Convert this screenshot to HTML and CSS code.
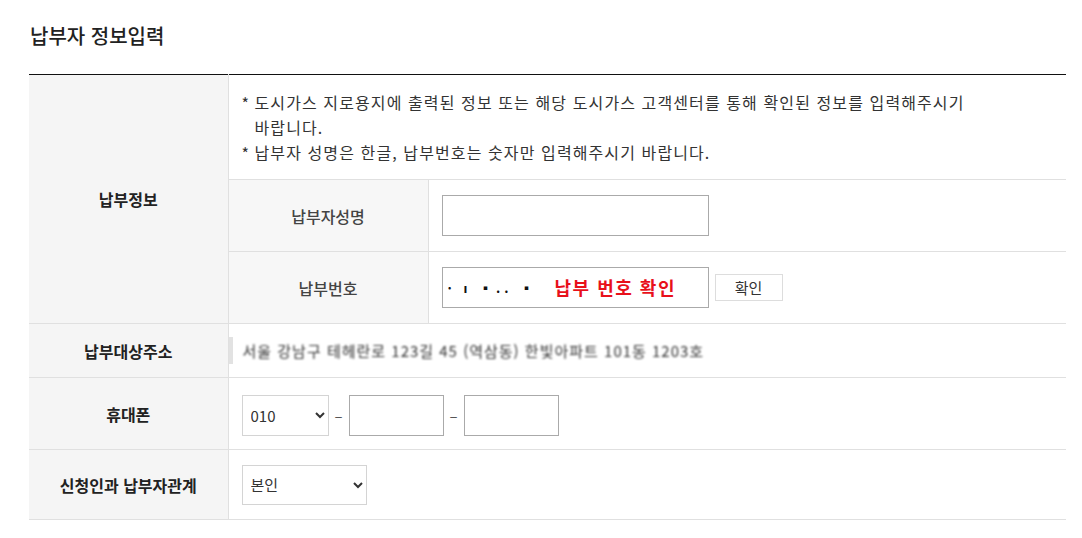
FILE: index.html
```html
<!DOCTYPE html>
<html lang="ko">
<head>
    <meta charset="UTF-8">
    <meta name="viewport" content="width=device-width, initial-scale=1.0">
    <title>납부자 정보입력</title>
    <link rel="stylesheet" href="styles.css">
</head>
<body>

<div class="container">
    <h2 class="title">납부자 정보입력</h2>

    <table class="form-table">
        <colgroup>
            <col class="col-label">
            <col class="col-sub">
            <col>
        </colgroup>
        <tr class="row-notice">
            <th rowspan="3">납부정보</th>
            <td colspan="2" class="notice">
                <ul>
                    <li>도시가스 지로용지에 출력된 정보 또는 해당 도시가스 고객센터를 통해 확인된 정보를 입력해주시기 바랍니다.</li>
                    <li>납부자 성명은 한글, 납부번호는 숫자만 입력해주시기 바랍니다.</li>
                </ul>
            </td>
        </tr>
        <tr class="row-field">
            <th class="sub">납부자성명</th>
            <td><input type="text" class="text-input wide" id="payer-name"></td>
        </tr>
        <tr class="row-field">
            <th class="sub">납부번호</th>
            <td>
                <div class="inline">
                    <div class="input-wrap">
                        <input type="text" class="text-input wide masked" id="payer-no" value="· ı ▪.. ▪">
                        <span class="check-label">납부 번호 확인</span>
                    </div>
                    <button type="button" class="small-btn">확인</button>
                </div>
            </td>
        </tr>
        <tr class="row-address">
            <th>납부대상주소</th>
            <td colspan="2" class="address-cell">
                <div class="address"><span class="masked-text">서울 강남구 테헤란로 123길 45 (역삼동) 한빛아파트 101동 1203호</span></div>
            </td>
        </tr>
        <tr class="row-field">
            <th>휴대폰</th>
            <td colspan="2">
                <div class="inline phone">
                    <select class="select phone-first">
                        <option>010</option>
                        <option>011</option>
                        <option>016</option>
                    </select>
                    <span class="dash">–</span>
                    <input type="text" class="text-input phone-part">
                    <span class="dash">–</span>
                    <input type="text" class="text-input phone-part">
                </div>
            </td>
        </tr>
        <tr class="row-relation">
            <th>신청인과 납부자관계</th>
            <td colspan="2">
                <select class="select relation">
                    <option>본인</option>
                    <option>가족</option>
                    <option>기타</option>
                </select>
            </td>
        </tr>
    </table>
</div>

</body>
</html>
```

FILE: styles.css
```css
body {
    font-family: "Noto Sans CJK KR", "Noto Sans", sans-serif;
    margin: 0;
    padding: 0;
    background-color: white;
    color: #333;
}

.container {
    padding: 0 16px 0 29px;
}

.title {
    font-size: 20px;
    font-weight: 500;
    line-height: 28px;
    color: #222;
    margin: 22px 0 24px 1px;
}

.form-table {
    width: 1037px;
    border-collapse: collapse;
    table-layout: fixed;
    border-top: 1px solid #111;
}

.col-label {
    width: 199px;
}

.col-sub {
    width: 200px;
}

.form-table th {
    background-color: #f5f5f5;
    font-size: 16px;
    font-weight: 700;
    color: #222;
    text-align: center;
    border-bottom: 1px solid #e0e0e0;
    border-right: 1px solid #e0e0e0;
    padding: 0;
}

.form-table th.sub {
    background-color: #f7f7f7;
    font-weight: 500;
    color: #444;
}

.form-table td {
    border-bottom: 1px solid #e0e0e0;
    padding: 0 0 0 13px;
    font-size: 15px;
}

.row-notice td {
    height: 104px;
}

.row-field th,
.row-field td {
    height: 71px;
}

.row-address th,
.row-address td {
    height: 53px;
}

.row-relation th,
.row-relation td {
    height: 69px;
}

.notice ul {
    list-style: none;
    margin: 0;
    padding: 0;
    max-width: 745px;
    word-break: keep-all;
}

.notice li {
    position: relative;
    padding-left: 13px;
    font-size: 16px;
    line-height: 25px;
    letter-spacing: 1.1px;
    color: #333;
}

.notice li::before {
    content: "*";
    position: absolute;
    left: 0;
    top: 1px;
}

.inline {
    display: flex;
    align-items: center;
}

.input-wrap {
    position: relative;
}

.text-input {
    height: 41px;
    border: 1px solid #aaa;
    padding: 0 5px;
    box-sizing: border-box;
    font-family: inherit;
    font-size: 13px;
    color: #111;
    background-color: white;
}

.text-input.wide {
    width: 267px;
}

.masked {
    letter-spacing: 4px;
    font-weight: 700;
}

.check-label {
    position: absolute;
    left: 113px;
    top: 50%;
    transform: translateY(-54%);
    font-size: 18px;
    font-weight: 700;
    letter-spacing: 1.5px;
    color: #e8101a;
    pointer-events: none;
}

.small-btn {
    margin-left: 6px;
    width: 68px;
    height: 27px;
    border: 1px solid #ddd;
    background-color: white;
    font-family: inherit;
    font-size: 15px;
    color: #333;
    padding: 0;
    cursor: pointer;
}

.address-cell {
    padding-left: 0 !important;
}

.address {
    border-left: 4px solid #e2e2e2;
    padding-left: 10px;
    line-height: 27px;
}

.masked-text {
    color: #333;
    font-size: 15px;
    letter-spacing: 1px;
    filter: blur(1px);
}

.phone {
    gap: 5px;
    padding-top: 3px;
}

.select {
    height: 41px;
    border: 1px solid #d4d4d4;
    border-radius: 0;
    background-color: white;
    font-family: inherit;
    font-size: 15px;
    color: #333;
    padding: 0 0 0 4px;
}

.phone-first {
    width: 87px;
}

.relation {
    width: 125px;
    height: 40px;
}

.dash {
    width: 10px;
    text-align: center;
    color: #555;
    font-size: 15px;
}

.phone-part {
    width: 95px;
}
```
